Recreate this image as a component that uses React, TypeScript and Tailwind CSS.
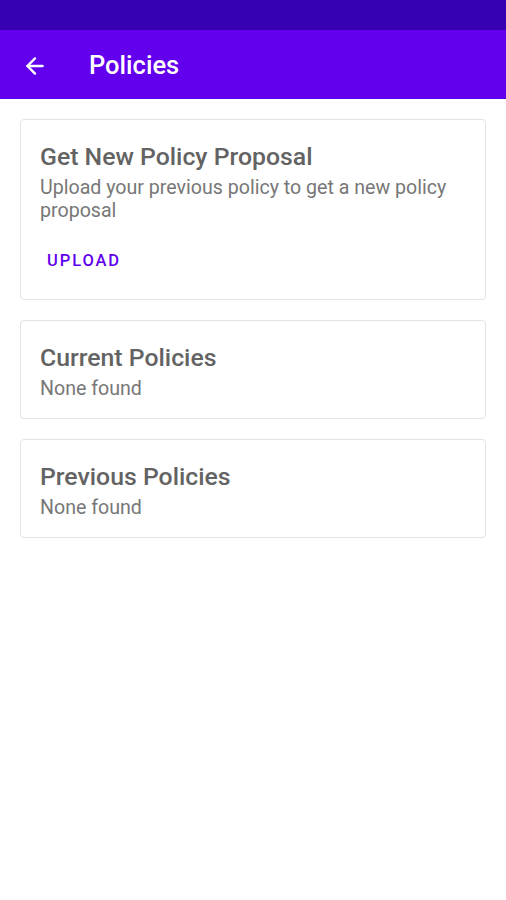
import { ArrowLeft } from "lucide-react";

type PolicyCardProps = {
  title: string;
  text: string;
  action?: string;
};

function PolicyCard({ title, text, action }: PolicyCardProps) {
  return (
    <section className="rounded-[4px] border border-[#e3e3e3] bg-white px-[19px] pt-[22px] pb-[18px]">
      <h2 className="text-[24.8px] leading-[30px] font-medium text-[#636363]">{title}</h2>
      <p className="mt-[4px] text-[19.6px] leading-[23px] text-[#777777]">{text}</p>
      {action && (
        <button className="mt-[27px] mb-[8px] ml-[7px] text-[16.5px] leading-[24px] font-medium tracking-[1.9px] text-[#6200ee]">
          {action}
        </button>
      )}
    </section>
  );
}

export default function App() {
  return (
    <div className="flex h-[900px] w-[506px] flex-col bg-white font-['Roboto',sans-serif]">
      <div className="h-[30px] bg-[#3700b3]" />
      <header className="flex h-[69px] items-center bg-[#6200ee] px-[22px] pt-[2px] text-white">
        <ArrowLeft size={26} strokeWidth={2.2} />
        <h1 className="ml-[41px] text-[25.5px] font-medium">Policies</h1>
      </header>
      <main className="flex flex-col gap-[20px] px-[20px] pt-[20px]">
        <PolicyCard
          title="Get New Policy Proposal"
          text="Upload your previous policy to get a new policy proposal"
          action="UPLOAD"
        />
        <PolicyCard title="Current Policies" text="None found" />
        <PolicyCard title="Previous Policies" text="None found" />
      </main>
    </div>
  );
}
